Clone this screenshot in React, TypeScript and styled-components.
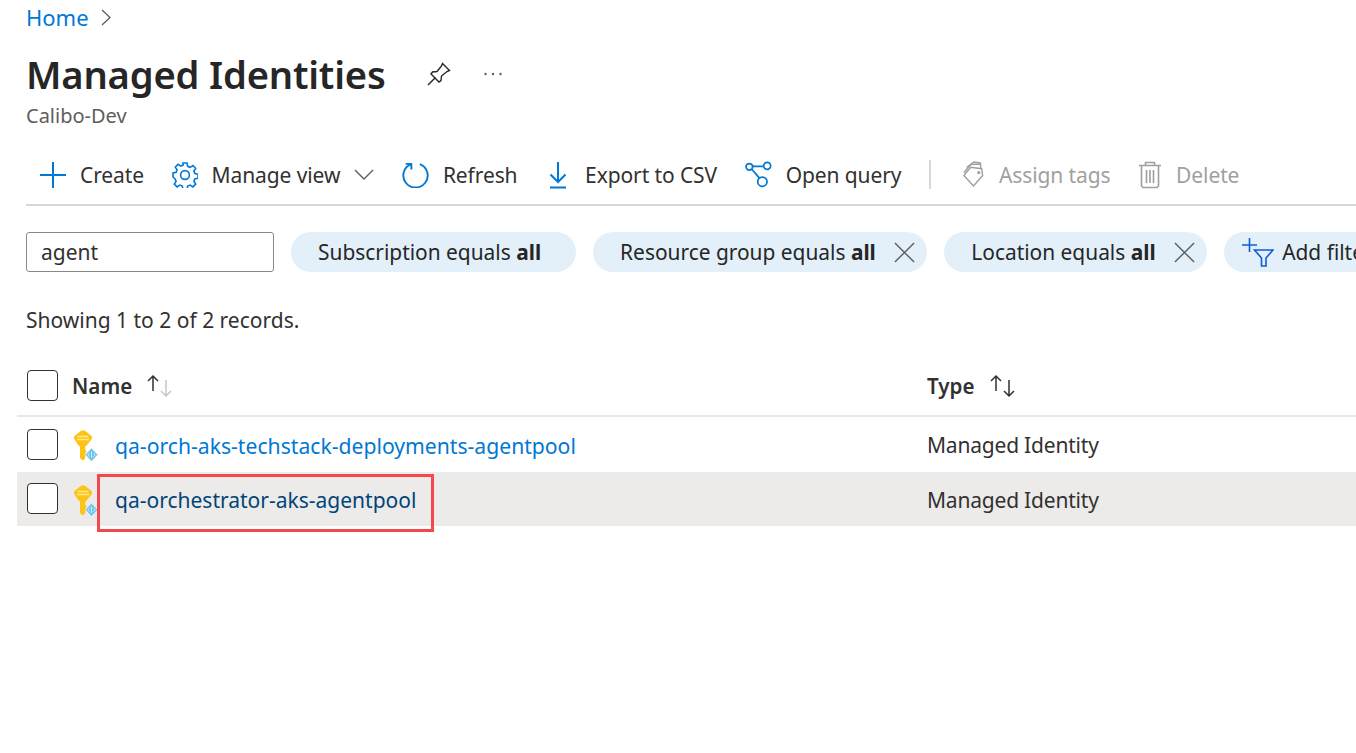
import { FC, ReactNode } from "react";
import styled, { createGlobalStyle } from "styled-components";

const GlobalStyle = createGlobalStyle`
  html, body {
    margin: 0;
    padding: 0;
    background: #ffffff;
    overflow: hidden;
    font-family: "Noto Sans", "Open Sans", "Liberation Sans", sans-serif;
    color: #323130;
  }
  * { box-sizing: border-box; }
`;

const Page = styled.div`
  position: relative;
  width: 1356px;
  height: 753px;
  overflow: hidden;
`;

const Header = styled.div`
  padding-left: 26px;
`;

const Breadcrumb = styled.div`
  display: flex;
  align-items: center;
  gap: 12px;
  height: 34px;
  font-size: 22px;
  color: #0078d4;
`;

const TitleRow = styled.div`
  display: flex;
  align-items: center;
  height: 62px;
  margin-top: 9px;
`;

const Title = styled.h1`
  margin: 0;
  font-size: 38.2px;
  font-weight: 600;
  color: #262626;
  letter-spacing: -0.2px;
`;

const PinButton = styled.span`
  display: flex;
  margin-left: 41px;
`;

const MoreButton = styled.span`
  display: flex;
  margin-left: 33px;
`;

const Subtitle = styled.div`
  font-size: 20px;
  line-height: 26px;
  margin-top: -2px;
  color: #605e5c;
`;

const Toolbar = styled.div`
  display: flex;
  align-items: center;
  height: 59px;
  margin: 18px 0 0 26px;
  padding-left: 14px;
  border-bottom: 2px solid #d6d6d6;
  padding-bottom: 2px;
`;

const ToolItem = styled.div<{ $disabled?: boolean }>`
  display: flex;
  align-items: center;
  gap: 14px;
  margin-right: 27.6px;
  font-size: 21px;
  letter-spacing: -0.1px;
  white-space: nowrap;
  color: ${(p) => (p.$disabled ? "#a19f9d" : "#323130")};
`;

const ToolSeparator = styled.div`
  width: 2px;
  height: 29px;
  background: #d9d9d9;
  margin-right: 31px;
`;

const FilterRow = styled.div`
  display: flex;
  align-items: center;
  gap: 17px;
  margin: 26px 0 0 26px;
  width: 1400px;
`;

const SearchBox = styled.div`
  flex: none;
  display: flex;
  align-items: center;
  width: 248px;
  height: 40px;
  padding-left: 14px;
  border: 1.5px solid #8a8886;
  border-radius: 3px;
  font-size: 21px;
  color: #323130;
`;

const Pill = styled.div<{ $plain?: boolean }>`
  flex: none;
  display: flex;
  align-items: center;
  height: 40px;
  padding: 0 ${(p) => (p.$plain ? 35 : 12)}px 0 27px;
  gap: 18.5px;
  background: #e3f0fa;
  border-radius: 20px;
  font-size: 20.9px;
  white-space: nowrap;
  color: #262626;

  b {
    font-weight: 700;
  }
`;

const AddPill = styled(Pill)`
  padding-left: 18px;
  padding-right: 20px;
  gap: 8px;
`;

const RecordCount = styled.div`
  margin: 31px 0 0 26px;
  font-size: 21px;
  line-height: 34px;
  color: #323130;
`;

const Table = styled.div`
  margin: 19px 0 0 17px;
`;

const Row = styled.div<{ $head?: boolean; $selected?: boolean }>`
  display: grid;
  grid-template-columns: 910px 1fr;
  align-items: center;
  height: ${(p) => (p.$head ? 61 : 54.5)}px;
  background: ${(p) => (p.$selected ? "#ecebe9" : "transparent")};
  border-bottom: ${(p) => (p.$head ? "2px solid #e8e8e8" : "none")};
  font-size: 21px;
`;

const Cell = styled.div<{ $first?: boolean }>`
  display: flex;
  align-items: center;
  padding-left: ${(p) => (p.$first ? 10 : 0)}px;
`;

const CheckBox = styled.div`
  flex: none;
  width: 31px;
  height: 31px;
  border: 1.5px solid #323130;
  border-radius: 4px;
  background: #ffffff;
`;

const HeadLabel = styled.span<{ $first?: boolean }>`
  margin-left: ${(p) => (p.$first ? 14 : 0)}px;
  font-weight: 600;
  font-size: 20.6px;
  color: #323130;
`;

const SortIcon = styled.span`
  display: flex;
  margin-left: 13px;
`;

const RowLink = styled.a<{ $selected?: boolean }>`
  margin-left: 17px;
  padding-top: 2px;
  font-size: ${(p) => (p.$selected ? 21 : 21.15)}px;
  color: ${(p) => (p.$selected ? "#004578" : "#0078d4")};
  text-decoration: none;
`;

const TypeText = styled.span`
  padding-top: 2px;
  letter-spacing: -0.2px;
  color: #323130;
`;

const KeyWrap = styled.span`
  display: flex;
  margin-left: 16px;
  padding-top: 4px;
`;

const Highlight = styled.div`
  position: absolute;
  left: 97px;
  top: 474px;
  width: 337px;
  height: 58px;
  border: 3px solid #f4484c;
  pointer-events: none;
`;

const BLUE = "#0078d4";

const PlusIcon: FC = () => (
  <svg width="26" height="26" viewBox="0 0 26 26" fill="none" stroke={BLUE} strokeWidth="2">
    <path d="M13 0v26M0 13h26" />
  </svg>
);

const GearIcon: FC = () => (
  <svg width="26" height="26" viewBox="0 0 26 26" fill="none" stroke={BLUE} strokeWidth="1.6">
    <path d="M11 1h4l.7 3.300 2.400 1 2.800-1.800 2.800 2.800-1.800 2.800 1 2.400 3.100.7v4l-3.100.7-1 2.400 1.800 2.800-2.800 2.800-2.800-1.800-2.400 1-.7 3.100h-4l-.7-3.100-2.400-1-2.800 1.800-2.800-2.800 1.800-2.800-1-2.400L1 15v-4l3.100-.7 1-2.400-1.800-2.800 2.800-2.800 2.800 1.800 2.400-1z" />
    <circle cx="13" cy="13" r="4.400" />
  </svg>
);

const ChevronDown: FC = () => (
  <svg width="20" height="11" viewBox="0 0 20 11" fill="none" stroke="#605e5c" strokeWidth="1.4">
    <path d="M1 1l9 9 9-9" />
  </svg>
);

const RefreshIcon: FC = () => (
  <svg width="27" height="27" viewBox="0 0 28 28" fill="none" stroke={BLUE} strokeWidth="2">
    <path d="M9.500 3.200a12.600 12.600 0 1 0 9 0" />
    <path d="M9.700 2.500v6.400M3.800 3h6.400" />
  </svg>
);

const DownloadIcon: FC = () => (
  <svg width="26" height="28" viewBox="0 0 26 28" fill="none" stroke={BLUE} strokeWidth="2">
    <path d="M13 1v20M5.500 13.500l7.500 7.500 7.500-7.500M5 26.500h16" />
  </svg>
);

const QueryIcon: FC = () => (
  <svg width="27" height="27" viewBox="0 0 28 28" fill="none" stroke={BLUE} strokeWidth="1.8">
    <circle cx="4.500" cy="6" r="3.400" />
    <circle cx="23" cy="5" r="3.600" />
    <circle cx="18" cy="21.500" r="4.800" />
    <path d="M8 5.500h11.400M7 8.500l8 9.200" />
  </svg>
);

const TagsIcon: FC = () => (
  <svg width="23" height="27" viewBox="0 0 24 28" fill="none" stroke="#a19f9d" strokeWidth="1.5">
    <path d="M2 15l7-8.500 11.500 1.500 1 7-9.500 11z" />
    <path d="M2 12L9 3.500l10-.5.8 4" />
    <path d="M5 6.500L12.500 1l6.500.8.500 2" />
    <circle cx="17.500" cy="12" r="1" />
  </svg>
);

const TrashIcon: FC = () => (
  <svg width="24" height="28" viewBox="0 0 24 28" fill="none" stroke="#a19f9d" strokeWidth="1.6">
    <path d="M1 4.500h22M7.500 4.500V1.500h9v3M3.500 4.500v20.500l1.500 1.500h14l1.500-1.500V4.500M8.500 9v13M12 9v13M15.500 9v13" />
  </svg>
);

const CloseIcon: FC = () => (
  <svg width="21" height="21" viewBox="0 0 22 22" fill="none" stroke="#605e5c" strokeWidth="1.500">
    <path d="M1 1l20 20M21 1L1 21" />
  </svg>
);

const AddFilterIcon: FC = () => (
  <svg width="32" height="30" viewBox="0 0 32 30" fill="none" stroke="#0f5bd8" strokeWidth="1.600">
    <path d="M0 8h15M7.500 1v14" />
    <path d="M12.500 13h18.500l-7 8v8h-4.500v-8z" />
  </svg>
);

const PinIcon: FC = () => (
  <svg width="24" height="24" viewBox="0 0 24 24" fill="none" stroke="#262626" strokeWidth="1.400">
    <path d="M15.500 1.500l7 7-2.500 1-5.500 4.500-.5 4.500-2 1.500-8-8 1.500-2 4.500-.5L14.500 4z" />
    <path d="M1 23l7.500-7.500" />
  </svg>
);

const MoreIcon: FC = () => (
  <svg width="18" height="4" viewBox="0 0 18 4" fill="#605e5c">
    <circle cx="1.500" cy="2" r="1.200" />
    <circle cx="9" cy="2" r="1.200" />
    <circle cx="16.500" cy="2" r="1.200" />
  </svg>
);

const BreadcrumbChevron: FC = () => (
  <svg width="10" height="17" viewBox="0 0 10 17" fill="none" stroke="#605e5c" strokeWidth="1.300">
    <path d="M1 1l8 7.500-8 7.500" />
  </svg>
);

const SortArrows: FC<{ active?: boolean }> = ({ active }) => (
  <svg width="30" height="24" viewBox="0 0 30 24" fill="none" strokeWidth="1.500">
    <path d="M8 17V2M3 7l5-5 5 5" stroke="#323130" />
    <path d="M21 6v16M16 17l5 5 5-5" stroke={active ? "#c8c6c4" : "#323130"} />
  </svg>
);

const KeyIcon: FC = () => (
  <svg width="24" height="32" viewBox="0 0 24 32" fill="none">
    <path
      d="M7 .8Q9 -.4 11 .8L17 5.500q1.800 1.800.5 4L13 15q-1 1.200-1.800 1.500V20l1.800 1.500-1.800 1.500 1.800 1.500-1.800 1.500v2.500L8.800 30.500 6 28V16.500q-.8-.3-1.800-1.500L.5 9.500Q-.8 7.300 1 5.500z"
      fill="#fcc419"
    />
    <path d="M3.500 6.500h11M3 9.500h12" stroke="#ffe98a" strokeWidth="1.400" />
    <path d="M17.500 18l6.300 6.700-6.300 6.700-6.300-6.700z" fill="#6cc4ea" stroke="#ffffff" strokeWidth="0.600" />
    <path d="M17.500 21.500v6.500M15.500 22.800l-1.700 1.900 1.700 1.900M19.500 22.800l1.700 1.900-1.700 1.900" stroke="#def3fc" strokeWidth="0.900" />
  </svg>
);

const Tool: FC<{ icon: ReactNode; label: string; disabled?: boolean; trailing?: ReactNode }> = ({
  icon,
  label,
  disabled,
  trailing,
}) => (
  <ToolItem $disabled={disabled}>
    {icon}
    {label}
    {trailing}
  </ToolItem>
);

const rows = [
  { name: "qa-orch-aks-techstack-deployments-agentpool", selected: false },
  { name: "qa-orchestrator-aks-agentpool", selected: true },
];

export default function App() {
  return (
    <Page>
      <GlobalStyle />
      <Header>
        <Breadcrumb>
          Home <BreadcrumbChevron />
        </Breadcrumb>
        <TitleRow>
          <Title>Managed Identities</Title>
          <PinButton>
            <PinIcon />
          </PinButton>
          <MoreButton>
            <MoreIcon />
          </MoreButton>
        </TitleRow>
        <Subtitle>Calibo-Dev</Subtitle>
      </Header>

      <Toolbar>
        <Tool icon={<PlusIcon />} label="Create" />
        <Tool icon={<GearIcon />} label="Manage view" trailing={<ChevronDown />} />
        <Tool icon={<RefreshIcon />} label="Refresh" />
        <Tool icon={<DownloadIcon />} label="Export to CSV" />
        <Tool icon={<QueryIcon />} label="Open query" />
        <ToolSeparator />
        <Tool icon={<TagsIcon />} label="Assign tags" disabled />
        <Tool icon={<TrashIcon />} label="Delete" disabled />
      </Toolbar>

      <FilterRow>
        <SearchBox>agent</SearchBox>
        <Pill $plain>
          <span>
            Subscription equals <b>all</b>
          </span>
        </Pill>
        <Pill>
          <span>
            Resource group equals <b>all</b>
          </span>
          <CloseIcon />
        </Pill>
        <Pill>
          <span>
            Location equals <b>all</b>
          </span>
          <CloseIcon />
        </Pill>
        <AddPill>
          <AddFilterIcon />
          Add filter
        </AddPill>
      </FilterRow>

      <RecordCount>Showing 1 to 2 of 2 records.</RecordCount>

      <Table>
        <Row $head>
          <Cell $first>
            <CheckBox />
            <HeadLabel $first>Name</HeadLabel>
            <SortIcon>
              <SortArrows active />
            </SortIcon>
          </Cell>
          <Cell>
            <HeadLabel>Type</HeadLabel>
            <SortIcon>
              <SortArrows />
            </SortIcon>
          </Cell>
        </Row>
        {rows.map((row) => (
          <Row key={row.name} $selected={row.selected}>
            <Cell $first>
              <CheckBox />
              <KeyWrap>
                <KeyIcon />
              </KeyWrap>
              <RowLink href="#" $selected={row.selected}>
                {row.name}
              </RowLink>
            </Cell>
            <Cell>
              <TypeText>Managed Identity</TypeText>
            </Cell>
          </Row>
        ))}
      </Table>

      <Highlight />
    </Page>
  );
}
